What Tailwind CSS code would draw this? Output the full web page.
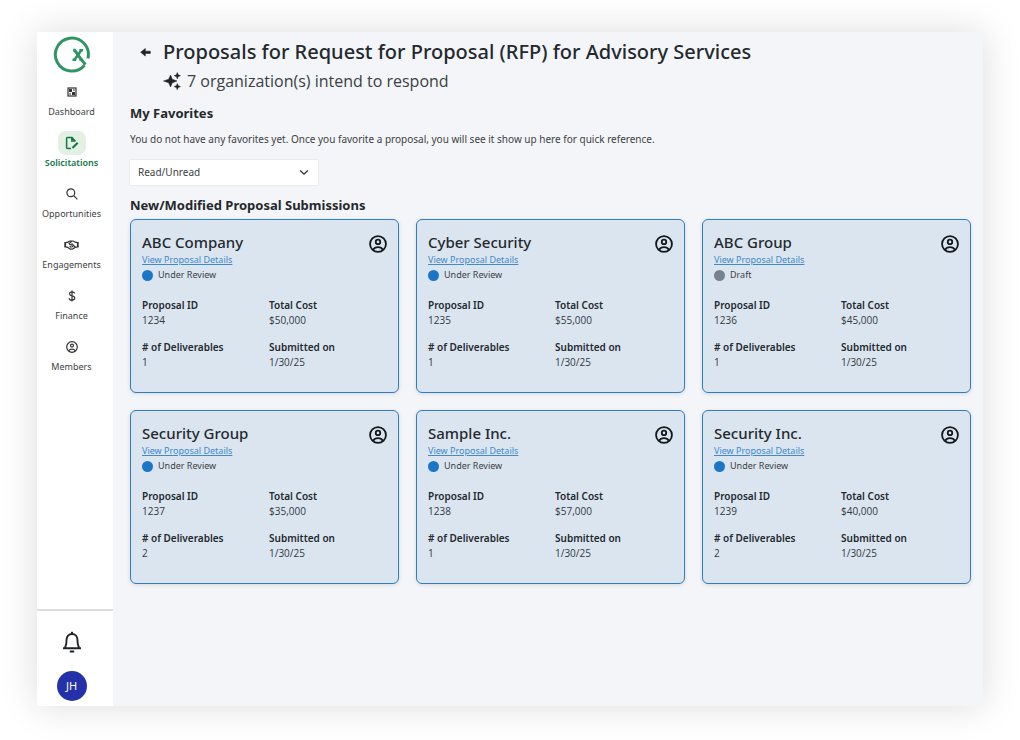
<!DOCTYPE html>
<html lang="en">
<head>
<meta charset="utf-8">
<meta name="viewport" content="width=device-width, initial-scale=1">
<title>Proposals</title>
<script src="https://cdn.jsdelivr.net/npm/@tailwindcss/browser@4"></script>
</head>
<body class="min-h-screen bg-white pt-8 pr-[37px] pb-[34px] pl-[37px] flex font-['Noto_Sans','Open_Sans',sans-serif] text-[#24292e]">
<svg class="hidden" aria-hidden="true">
  <symbol id="person" viewBox="0 0 24 24" fill="none" stroke="currentColor" stroke-width="2.4">
    <circle cx="12" cy="12" r="10.6"/><circle cx="12" cy="9.200" r="3"/><path d="M5.500 19.600c1.400-2.500 3.800-3.500 6.500-3.500s5.100 1 6.500 3.500"/>
  </symbol>
</svg>
<div class="flex flex-1 bg-[#f3f5f8] shadow-[0_0_36px_rgba(0,0,0,0.14)]">
  <aside class="w-[76px] shrink-0 bg-white flex flex-col pr-[7px]">
    <a href="#" aria-label="Home" class="mt-[3px] self-center">
      <svg class="size-[38px]" viewBox="0 0 38 38" fill="none" stroke="#2f9564">
        <path stroke-width="3" d="M31.500 30.200A16.500 16.500 0 1 1 34.900 23.500"/>
        <path stroke-width="3" d="M20.200 15.200h1.500l6.800 9.600 4 4.800"/>
        <path stroke-width="2.600" d="M28.300 15.200L21.500 24.800M26.300 15.200h3.800M19.500 24.800h3.800M26.500 24.800h3"/>
      </svg>
    </a>
    <nav class="mt-[7px] flex flex-col gap-3 text-[9px] leading-[15px] text-[#3d4145]">
      <a href="#" class="flex flex-col items-center">
        <span class="flex h-6 w-7 items-center justify-center">
          <svg class="size-[10px]" viewBox="0 0 10 10"><rect x="1" y="1" width="8" height="8" fill="none" stroke="#333" stroke-width="1.200"/><path fill="#333" d="M2 2h3v3H2zM5 5h3v3H5z"/><path fill="#333" d="M6 2.500h2v1H6zM2 6.500h2v1H2z"/></svg>
        </span>Dashboard</a>
      <a href="#" aria-current="page" class="flex flex-col items-center font-semibold text-[#15764a]">
        <span class="flex h-6 w-7 items-center justify-center rounded-lg bg-[#e2f1e4]">
          <svg class="size-[14px]" viewBox="0 0 14 14" fill="none" stroke="#15764a" stroke-width="1.500"><path d="M10 5.500V4.800L7 1.600H2.600a1 1 0 0 0-1 1v8.800a1 1 0 0 0 1 1H6M6.800 1.600v3.400H10"/><path stroke-width="2" d="M7.500 12l5.200-5.200"/></svg>
        </span>Solicitations</a>
      <a href="#" class="flex flex-col items-center">
        <span class="flex h-6 w-7 items-center justify-center">
          <svg class="size-3" viewBox="0 0 12 12" fill="none" stroke="#333" stroke-width="1.200"><circle cx="4.800" cy="4.800" r="3.900"/><path d="M7.700 7.700l3.700 3.700"/></svg>
        </span>Opportunities</a>
      <a href="#" class="flex flex-col items-center">
        <span class="flex h-6 w-7 items-center justify-center">
          <svg class="h-[10px] w-[15px]" viewBox="0 0 15 10" fill="none" stroke="#333" stroke-width="1.200"><path stroke-width="1.800" d="M1.200 2v5.500M13.800 2v5.500"/><path d="M2 2.300h1.600l2-1.300h3.600l2.200 1.300H13M2 7.200h1.400l3 2h2l3-2H13M7.800 1.200L5 3.600c.6 1.300 2 1.200 3 .3l3.300 3.200M5.600 6l1.800 1.600M7.400 5.300l1.800 1.800"/></svg>
        </span>Engagements</a>
      <a href="#" class="flex flex-col items-center">
        <span class="flex h-6 w-7 items-center justify-center">
          <svg class="h-3 w-2" viewBox="0 0 8 12" fill="none" stroke="#333" stroke-width="1.200"><path d="M4 .5v11M6.700 3.500C6.500 2.500 5.500 1.900 4 1.900S1.500 2.600 1.500 3.800 2.500 5.600 4 5.900s2.700.9 2.700 2.200S5.600 10.100 4 10.100 1.300 9.400 1.100 8.300"/></svg>
        </span>Finance</a>
      <a href="#" class="flex flex-col items-center">
        <span class="flex h-6 w-7 items-center justify-center"><svg class="size-3 text-[#333]"><use href="#person"/></svg></span>Members</a>
    </nav>
    <div class="mt-auto -mr-[7px] flex flex-col items-center gap-[18px] border-t-2 border-[#dcdcdc] pt-5 pr-[7px] pb-[5px]">
      <button type="button" aria-label="Notifications">
        <svg class="size-[22px]" viewBox="0 0 22 22" fill="none" stroke="#1f2326" stroke-width="1.900"><path d="M2 17.200h18M4.300 17v-1.500c1-1.200 1.200-2.500 1.200-6.500 0-3.500 2.300-6 5.500-6s5.500 2.500 5.500 6c0 4 .2 5.300 1.200 6.500V17"/><path stroke-width="2" d="M11 .8V3M8.800 20.500h4.400"/></svg>
      </button>
      <button type="button" aria-label="Account" class="size-[30px] rounded-full bg-[#2431a8] text-[11px] text-white">JH</button>
    </div>
  </aside>

  <main class="min-w-0 flex-1 pt-[6px] pr-3 pl-[17px]">
    <header class="flex gap-3 pl-[10px]">
      <a href="#" aria-label="Back" class="mt-[9px] h-3 w-[11px]">
        <svg class="h-[11px] w-[11px]" viewBox="0 0 11 11"><path fill="#1f2326" stroke="#1f2326" stroke-width=".6" stroke-linejoin="round" d="M5.300 1.500v2.700h5v2.200h-5V9.100L.7 5.300z"/></svg>
      </a>
      <div>
        <h1 class="text-[20px] leading-[28px] font-medium">Proposals for Request for Proposal (RFP) for Advisory Services</h1>
        <p class="flex items-center gap-[6px] font-['Open_Sans'] text-base leading-[30px] text-[#3a3f44]">
          <svg class="size-[18px]" viewBox="0 0 18 18" fill="#1f2326" stroke="#1f2326" stroke-width=".5" stroke-linejoin="round"><path d="M7.500 3l1.800 4.200L14 9l-4.700 1.800L7.500 15l-1.800-4.200L.5 9l5.200-1.800zM14.300.5l.9 2.300 2.300.9-2.300.9-.9 2.300-.9-2.300-2.300-.9 2.300-.9zM14.300 11.500l.9 2.200 2.300.9-2.300.9-.9 2.200-.9-2.200-2.300-.9 2.300-.9z"/></svg>
          7 organization(s) intend to respond</p>
      </div>
    </header>
    <h2 class="mt-[7px] text-[13px] leading-5 font-bold">My Favorites</h2>
    <p class="mt-[6px] text-[10px] leading-5 text-[#3d4145]">You do not have any favorites yet. Once you favorite a proposal, you will see it show up here for quick reference.</p>
    <div class="relative mt-[11px] w-[188px]">
      <select aria-label="Read/Unread filter" class="block h-[25px] w-full appearance-none bg-white pl-2 text-[10px] text-[#3d4145] shadow-[0_0_1px_rgba(0,0,0,0.25)]"><option>Read/Unread</option></select>
      <svg class="pointer-events-none absolute top-[9px] right-[9px] h-[7px] w-[10px]" viewBox="0 0 10 7" fill="none" stroke="#333" stroke-width="1.300"><path d="M1.200 1.500L5 5.200l3.800-3.700"/></svg>
    </div>
    <h2 class="mt-[10px] text-[13px] leading-5 font-bold">New/Modified Proposal Submissions</h2>
    <div id="cards" class="mt-1 grid grid-cols-3 gap-[17px]"></div>
  </main>
</div>
<script>
const proposals = [
  ["ABC Company", "Under Review", "1234", "$50,000", "1"],
  ["Cyber Security", "Under Review", "1235", "$55,000", "1"],
  ["ABC Group", "Draft", "1236", "$45,000", "1"],
  ["Security Group", "Under Review", "1237", "$35,000", "2"],
  ["Sample Inc.", "Under Review", "1238", "$57,000", "1"],
  ["Security Inc.", "Under Review", "1239", "$40,000", "2"],
];
const field = (label, value) => `<div><dt class="text-[10px] leading-4 font-semibold">${label}</dt><dd class="font-['Open_Sans'] text-[10px] leading-[14px] text-[#33393f]">${value}</dd></div>`;
document.getElementById("cards").innerHTML = proposals.map(([name, status, id, cost, count]) => `
  <article class="rounded-md border border-[#2f7dc2] bg-[#dae5f0] pt-[11px] pr-[10px] pb-[23px] pl-[11px] shadow-[0_1px_4px_rgba(0,0,0,0.12)]">
    <div class="flex items-start justify-between">
      <div>
        <h3 class="text-[15px] leading-[22px] font-medium">${name}</h3>
        <a href="#" class="block text-[9px] leading-[14px] text-[#4289ca] underline">View Proposal Details</a>
        <p class="flex items-center gap-[5px] text-[9px] leading-4 text-[#3d4145]"><span class="size-[11px] rounded-full ${status === "Draft" ? "bg-[#76838f]" : "bg-[#1c76c8]"}"></span>${status}</p>
      </div>
      <button type="button" aria-label="Assigned contact" class="mt-1 mr-px"><svg class="size-[18px] text-[#14181c]"><use href="#person"/></svg></button>
    </div>
    <dl class="mt-[14px] grid grid-cols-2 gap-x-[8px] gap-y-3">
      ${field("Proposal ID", id)}${field("Total Cost", cost)}${field("# of Deliverables", count)}${field("Submitted on", "1/30/25")}
    </dl>
  </article>`).join("");
</script>
</body>
</html>
